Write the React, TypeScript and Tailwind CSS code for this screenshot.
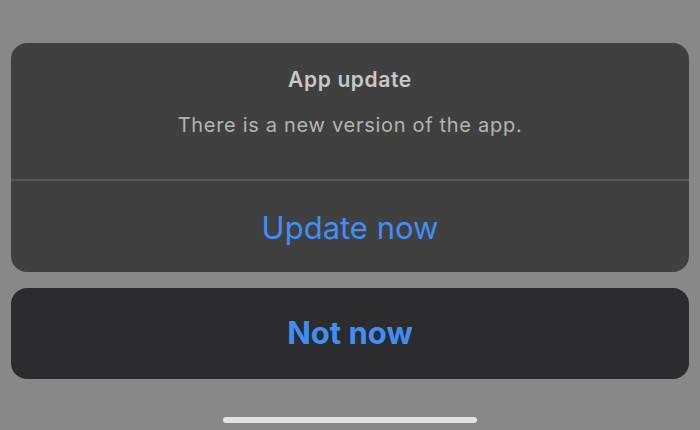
import React from 'react';

const App: React.FC = () => {
    return (
        <div
            className="w-[700px] h-[430px] bg-[#888888] flex flex-col px-[11px] pt-[43px] overflow-hidden"
            style={{ fontFamily: 'Inter, "Noto Sans", sans-serif' }}
        >
            {/* Alert sheet */}
            <div className="h-[229px] rounded-[16px] bg-[#404040] flex flex-col">
                <div className="h-[136px] flex flex-col items-center pt-[23px]">
                    <p className="text-[21px] leading-[28px] font-semibold tracking-[0.03em] text-[#c8c8c8]">App update</p>
                    <p className="mt-[18px] text-[20px] leading-[26px] tracking-[0.035em] text-[#b4b4b4]">
                        There is a new version of the app.
                    </p>
                </div>
                <div className="h-[2px] bg-[#575757]" />
                <button className="flex-1 flex items-center justify-center pt-[3px] text-[31px] text-[#3f8ff5]">
                    Update now
                </button>
            </div>

            {/* Cancel */}
            <button className="mt-[16px] h-[91px] rounded-[16px] bg-[#2c2c2e] flex items-center justify-center text-[31px] font-bold text-[#3f8ff5]">
                Not now
            </button>

            {/* Home indicator */}
            <div className="mt-[38px] self-center w-[254px] h-[6px] rounded-full bg-[#e2e2e2]" />
        </div>
    );
};

export default App;
